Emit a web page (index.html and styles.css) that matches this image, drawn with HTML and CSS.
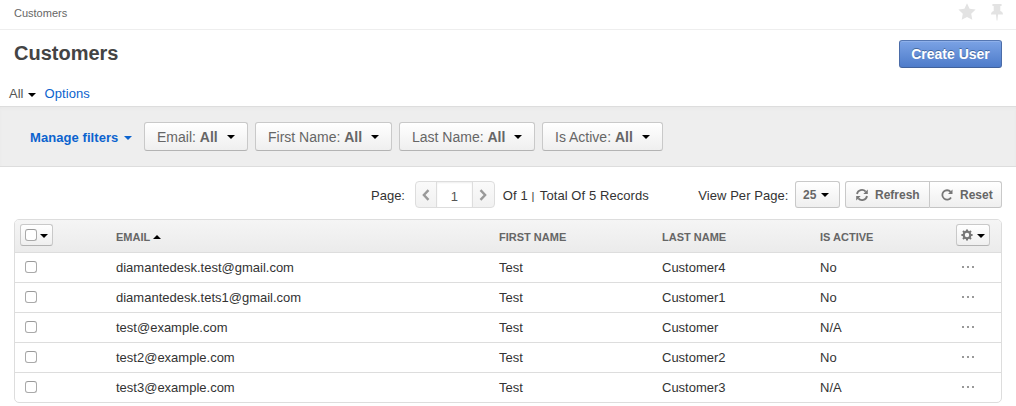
FILE: index.html
```html
<!DOCTYPE html>
<html lang="en">
<head>
<meta charset="utf-8">
<title>Customers</title>
<link rel="stylesheet" href="styles.css">
</head>
<body>
<header class="topbar">
  <span class="breadcrumb">Customers</span>
  <div class="top-icons">
    <svg width="18" height="18" viewBox="0 0 18 18"><path d="M9 .3l2.600 5.500 6 .8-4.400 4.200 1.100 6L9 13.900l-5.300 2.900 1.100-6L.4 6.600l6-.8z"/></svg>
    <svg width="12" height="18" viewBox="0 0 12 18"><path d="M2 1h8c1 0 1 2 0 2H9.300v5c1.700.7 2.700 1.700 2.700 3.500H7l-.6 6h-.8L5 11.500H0c0-1.800 1-2.800 2.700-3.500V3H2C1 3 1 1 2 1z"/></svg>
  </div>
</header>
<div class="title-row">
  <h1>Customers</h1>
  <button class="create">Create User</button>
</div>
<div class="views"><span>All</span><i class="caret"></i><a>Options</a></div>
<div class="filters">
  <a class="manage">Manage filters<i class="caret"></i></a>
  <button class="btn filter f-email"><span>Email: <b>All</b></span><i class="caret"></i></button>
  <button class="btn filter f-first"><span>First Name: <b>All</b></span><i class="caret"></i></button>
  <button class="btn filter f-last"><span>Last Name: <b>All</b></span><i class="caret"></i></button>
  <button class="btn filter f-active"><span>Is Active: <b>All</b></span><i class="caret"></i></button>
</div>
<div class="toolbar">
  <span class="page-label">Page:</span>
  <div class="pager">
    <span class="arrow"><svg width="8" height="12" viewBox="0 0 8 12"><path d="M6.500 1.200L1.900 6l4.600 4.800"/></svg></span>
    <span class="page-no">1</span>
    <span class="arrow"><svg width="8" height="12" viewBox="0 0 8 12"><path d="M1.500 1.200L6.100 6l-4.600 4.800"/></svg></span>
  </div>
  <span class="total">Of 1 <em>|</em> Total Of 5 Records</span>
  <span class="per-label">View Per Page:</span>
  <button class="btn size">25<i class="caret"></i></button>
  <div class="group">
    <button class="btn refresh"><svg width="12" height="12" viewBox="0 0 12 12"><path class="line" d="M1 5A5 5 0 0 1 9.700 2.700M11 7a5 5 0 0 1-8.700 2.300"/><path d="M11.800.5V5H7.300zM.2 11.500V7h4.500z"/></svg>Refresh</button>
    <button class="btn reset"><svg width="12" height="12" viewBox="0 0 12 12"><path class="line" d="M9.600 2.900A4.700 4.700 0 1 0 10 8.500"/><path d="M11.500.5V5H7z"/></svg>Reset</button>
  </div>
</div>
<div class="grid">
  <div class="row head">
    <div class="pick"><button class="btn mini select"><i class="check"></i><i class="caret"></i></button></div>
    <div>EMAIL<i class="caret up"></i></div><div>FIRST NAME</div><div>LAST NAME</div><div>IS ACTIVE</div>
    <div class="act"><button class="btn mini gear"><svg width="12" height="12" viewBox="0 0 12 12"><circle class="ring" cx="6" cy="6" r="3.300"/><path class="teeth" d="M6 .4v2.200M6 9.400v2.200M.4 6h2.200M9.400 6h2.200M2 2l1.500 1.500M8.500 8.500L10 10M2 10l1.500-1.500M8.500 3.500L10 2"/></svg><i class="caret"></i></button></div>
  </div>
  <div class="row"><div class="pick"><i class="check"></i></div><div>diamantedesk.test@gmail.com</div><div>Test</div><div>Customer4</div><div>No</div><div class="act"><span class="dots"><i></i><i></i><i></i></span></div></div>
  <div class="row"><div class="pick"><i class="check"></i></div><div>diamantedesk.tets1@gmail.com</div><div>Test</div><div>Customer1</div><div>No</div><div class="act"><span class="dots"><i></i><i></i><i></i></span></div></div>
  <div class="row"><div class="pick"><i class="check"></i></div><div>test@example.com</div><div>Test</div><div>Customer</div><div>N/A</div><div class="act"><span class="dots"><i></i><i></i><i></i></span></div></div>
  <div class="row"><div class="pick"><i class="check"></i></div><div>test2@example.com</div><div>Test</div><div>Customer2</div><div>No</div><div class="act"><span class="dots"><i></i><i></i><i></i></span></div></div>
  <div class="row"><div class="pick"><i class="check"></i></div><div>test3@example.com</div><div>Test</div><div>Customer3</div><div>N/A</div><div class="act"><span class="dots"><i></i><i></i><i></i></span></div></div>
</div>
</body>
</html>
```
FILE: styles.css
```css
* { box-sizing: border-box; }
body { margin: 0; background: #fff; color: #444; font: 13px/20px "Liberation Sans", Arial, sans-serif; height: 406px; overflow: hidden; }
button { font: inherit; margin: 0; }
svg { display: block; flex: none; }
.topbar { height: 30px; border-bottom: 1px solid #eee; display: flex; justify-content: space-between; padding: 3px 13px 0 14px; }
.breadcrumb { font-size: 11px; color: #666; }
.top-icons { display: flex; gap: 15px; fill: #e3e3e3; }
.title-row { height: 53px; display: flex; justify-content: space-between; padding: 10px 14px 0 14px; }
h1 { margin: 0; font-size: 20px; line-height: 27px; color: #444; }
.create { width: 103px; height: 28px; padding: 0; border: 1px solid #4769a3; border-color: #5577b3 #4b6ca8 #41629c; border-radius: 3px; background: linear-gradient(#7ba3e5, #4e7cca); box-shadow: inset 0 1px #8eb0ea; color: #fff; font-size: 14px; font-weight: bold; text-shadow: 0 -1px #44699f; }
.views { height: 23px; display: flex; align-items: center; padding-left: 9px; padding-bottom: 2px; color: #555; }
.views a { color: #0b63ce; margin-left: 8px; letter-spacing: .1px; }
.caret { width: 0; height: 0; flex: none; border: 4px solid transparent; border-top-color: #000; border-bottom: 0; }
.views .caret { margin: 3px 0 0 5px; }
.filters { height: 61px; display: flex; align-items: center; gap: 7px; background: #eee; border-top: 1px solid #ddd; border-bottom: 1px solid #ddd; padding-left: 30px; box-shadow: inset 0 2px 2px #e9e9e9; }
.manage { width: 107px; display: flex; align-items: center; color: #0b63ce; font-weight: bold; padding-top: 2px; letter-spacing: .07px; }
.manage .caret { border-top-color: #0b63ce; margin-left: 6px; }
.btn { display: flex; align-items: center; color: #666; border: 1px solid #c9c9c9; border-bottom-color: #b3b3b3; border-radius: 3px; background: linear-gradient(#fff, #efefef); padding: 0; white-space: nowrap; }
.filter { height: 29px; justify-content: space-between; padding: 0 12px; font-size: 14px; }
.f-email { width: 104px; }
.f-first { width: 137px; }
.f-last { width: 136px; }
.f-active { width: 121px; }
.toolbar { height: 52px; padding: 14px 14px 11px 371px; display: flex; align-items: center; color: #333; }
.page-label { width: 44px; margin-top: 2px; }
.pager { display: flex; flex: none; width: 80px; height: 27px; border: 1px solid #ddd; border-radius: 4px; background: linear-gradient(#fafafa, #f1f1f1); overflow: hidden; }
.arrow { width: 20px; display: flex; align-items: center; justify-content: center; }
.arrow:last-child { width: 21px; }
.arrow path { fill: none; stroke: #999; stroke-width: 2.400; }
.page-no { width: 37px; border: solid #ddd; border-width: 0 1px; background: #fff; text-align: center; line-height: 29px; color: #555; box-shadow: inset 0 1px 2px #eee; }
.total { width: 150px; margin: 2px 0 0 8px; white-space: nowrap; letter-spacing: .08px; }
.total em { font-style: normal; font-size: 11px; margin-right: 2px; }
.per-label { margin: 2px 0 0 46px; width: 97px; white-space: nowrap; letter-spacing: .05px; }
.toolbar .btn { flex: none; height: 27px; font-weight: bold; font-size: 12px; border-bottom-color: #c4c4c4; }
.size { width: 45px; padding-left: 7px; }
.size .caret { margin-left: 5px; }
.group { display: flex; margin-left: 5px; }
.toolbar .refresh { width: 85px; border-radius: 3px 0 0 3px; padding-left: 10px; gap: 7px; }
.toolbar .reset { width: 72px; border-radius: 0 3px 3px 0; border-left: 0; padding-left: 11px; gap: 7px; }
.group svg { fill: #777; }
.group .line { fill: none; stroke: #777; stroke-width: 1.800; }
.grid { margin: 0 14px; border: 1px solid #ddd; border-radius: 5px; overflow: hidden; }
.row { display: grid; grid-template-columns: 101px 383px 163px 158px 136px 1fr; height: 30px; align-items: center; border-bottom: 1px solid #ddd; color: #333; }
.row:last-child { height: 29px; border-bottom: 0; }
.head { height: 33px; background: linear-gradient(#f5f5f5, #ebebeb); font-size: 11px; font-weight: bold; color: #666; padding-top: 2px; }
.head > div { display: flex; align-items: center; }
.up { border: 4px solid transparent; border-bottom-color: #000; border-top: 0; margin-left: 3px; }
.pick { padding: 0 0 2px 10px; }
.check { display: block; flex: none; width: 12px; height: 12px; border: 1px solid #aaa; border-top-color: #999; border-radius: 3px; background: #fff; }
.head .pick { padding: 0 0 0 5px; }
.mini { height: 22px; margin-top: -5px; }
.select { width: 33px; padding-left: 4px; }
.select .caret { margin-left: 3px; margin-top: 2px; }
.gear { width: 34px; padding-left: 4px; }
.gear .caret { margin-left: 4px; margin-top: 2px; }
.ring { fill: none; stroke: #777; stroke-width: 2.200; }
.teeth { stroke: #777; stroke-width: 2; }
.act { padding: 0 0 2px 6px; }
.head .act { padding: 0; }
.dots { display: flex; gap: 3px; }
.dots i { width: 2px; height: 2px; background: #999; }
```
